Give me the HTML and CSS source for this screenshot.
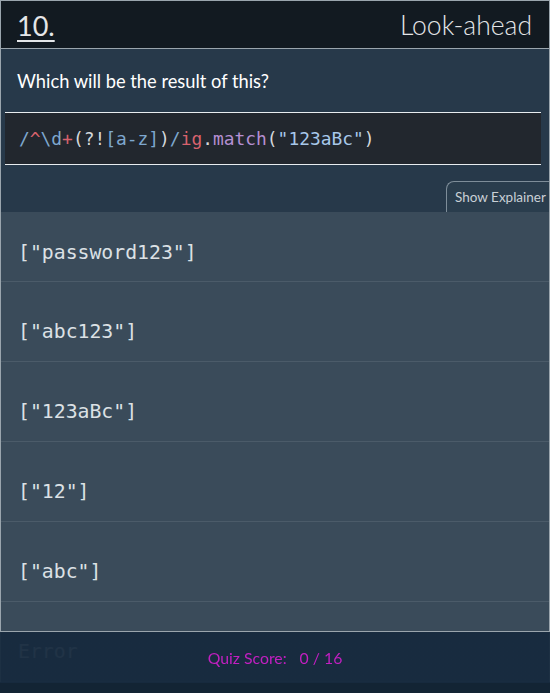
FILE: index.html
```html
<!DOCTYPE html>
<html lang="en">
<head>
<meta charset="utf-8">
<title>Quiz 10 - Look-ahead</title>
<link rel="stylesheet" href="styles.css">
</head>
<body>
<div class="card">
  <header class="head">
    <span class="num">10.</span>
    <span class="topic">Look-ahead</span>
  </header>
  <section class="question">
    <p class="prompt">Which will be the result of this?</p>
    <pre class="code"><span class="b">/</span><span class="r">^</span><span class="b">\d</span><span class="r">+</span><span class="w">(?!</span><span class="b">[a-z]</span><span class="w">)</span><span class="b">/</span><span class="r">ig</span><span class="w">.</span><span class="p">match</span><span class="w">(</span><span class="s">"123aBc"</span><span class="w">)</span></pre>
    <div class="tabrow"><button class="tab">Show Explainer</button></div>
  </section>
  <ul class="options">
    <li class="opt first">["password123"]</li>
    <li class="opt">["abc123"]</li>
    <li class="opt">["123aBc"]</li>
    <li class="opt">["12"]</li>
    <li class="opt">["abc"]</li>
    <li class="opt">Error</li>
  </ul>
</div>
<footer class="foot">
  <span class="score">Quiz Score:</span><span class="val">0 / 16</span>
</footer>
</body>
</html>
```
FILE: styles.css
```css
html, body {
  margin: 0;
  padding: 0;
  background: #172a3e;
  height: 693px;
  overflow: hidden;
}
.card {
  border: 1px solid #9aa5ad;
  border-bottom: none;
  background: #3a4b5a;
}
.head {
  height: 47px;
  background: #121a21;
  border-bottom: 1px solid #9aa5ad;
  display: flex;
  align-items: center;
  justify-content: space-between;
  padding: 0 17px 0 16px;
  font-family: Lato, "Open Sans", sans-serif;
  color: #e4e6e8;
}
.num {
  font-size: 27px;
  font-weight: 400;
  text-decoration: underline;
  text-decoration-thickness: 2px;
  text-underline-offset: 4px;
  padding-top: 1px;
}
.topic {
  font-size: 26.5px;
  font-weight: 300;
  padding-top: 1px;
}
.question {
  background: #27394a;
  padding: 21px 0 0 4px;
}
.prompt {
  margin: 0 0 0 12px;
  font-family: Lato, "Open Sans", sans-serif;
  font-size: 18.3px;
  color: #ffffff;
  line-height: 22px;
}
.code {
  margin: 20px 0 0 0;
  width: 536px;
  box-sizing: border-box;
  background: #22272e;
  border-top: 1px solid #e8ecef;
  border-bottom: 1px solid #e8ecef;
  padding: 14px 14px;
  height: 53px;
  font-family: "DejaVu Sans Mono", monospace;
  font-size: 17.9px;
  line-height: 23px;
  color: #d4d8dc;
}
.b { color: #7ea7cf; }
.r { color: #d8626d; }
.w { color: #d4d8dc; }
.p { color: #b58fd2; }
.s { color: #a8c8ea; }
.tabrow {
  display: flex;
  justify-content: flex-end;
  padding-top: 16px;
}
.tab {
  height: 31px;
  width: 103px;
  box-sizing: border-box;
  border: 1px solid #7e8d99;
  border-right: none;
  border-bottom: none;
  border-radius: 8px 0 0 0;
  background: #2a3d4d;
  color: #c9d0d6;
  font-family: Lato, "Open Sans", sans-serif;
  font-size: 13.5px;
  padding: 0 0 1px 8px;
  text-align: left;
  white-space: nowrap;
}
.options {
  list-style: none;
  margin: 0;
  padding: 0;
}
.opt {
  height: 80px;
  box-sizing: border-box;
  border-bottom: 1px solid #4b5b69;
  padding: 36px 0 0 17px;
  font-family: "DejaVu Sans Mono", monospace;
  font-size: 19.8px;
  line-height: 28px;
  color: #dce1e5;
}
.opt.first {
  height: 70px;
  padding-top: 27px;
}
.foot {
  position: fixed;
  left: 0;
  right: 0;
  bottom: 0;
  height: 61px;
  border-top: 1px solid #9aa5ad;
  background: linear-gradient(#172a3ef3 0, #172a3ef3 51px, #132434 51px);
  display: flex;
  justify-content: center;
  align-items: flex-start;
  gap: 13px;
  padding: 0;
  font-family: Lato, "Open Sans", sans-serif;
  font-size: 15.8px;
  color: #c21fc1;
}
.score, .val { line-height: 20px; padding-top: 16px; }
```
